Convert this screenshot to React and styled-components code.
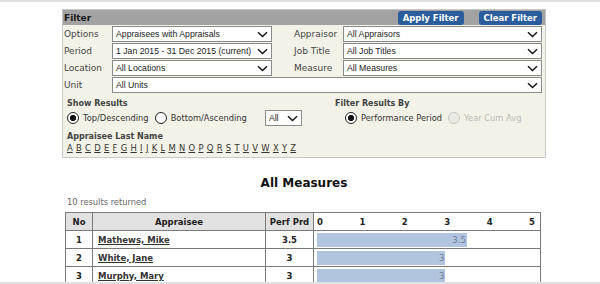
import React from "react";
import styled, { createGlobalStyle } from "styled-components";

const GlobalStyle = createGlobalStyle`
  html, body {
    margin: 0;
    padding: 0;
    background: #ffffff;
    font-family: "DejaVu Sans", Verdana, sans-serif;
    color: #333333;
  }
  body {
    border-top: 2px solid #e2e2e2;
    overflow: hidden;
  }
`;

const letters = "ABCDEFGHIJKLMNOPQRSTUVWXYZ".split("");

const results = [
  { no: 1, name: "Mathews, Mike", perf: "3.5", value: 3.5 },
  { no: 2, name: "White, Jane", perf: "3", value: 3 },
  { no: 3, name: "Murphy, Mary", perf: "3", value: 3 },
];

const UNIT = 42.8;

const Chevron = () => (
  <svg width="11" height="7" viewBox="0 0 11 7">
    <path d="M1 1.2 L5.5 5.5 L10 1.2" fill="none" stroke="#111" strokeWidth="1.4" />
  </svg>
);

const Dropdown = ({ value, span }) => (
  <SelectBox $span={span}>
    <span>{value}</span>
    <Chevron />
  </SelectBox>
);

const Radio = ({ checked, disabled, label }) => (
  <RadioItem $disabled={disabled}>
    <RadioDot $checked={checked} $disabled={disabled} />
    {label}
  </RadioItem>
);

const App = () => {
  return (
    <Page>
      <GlobalStyle />
      <FilterPanel>
        <FilterHeader>
          <HeaderTitle>Filter</HeaderTitle>
          <ButtonGroup>
            <ActionButton>Apply Filter</ActionButton>
            <ActionButton>Clear Filter</ActionButton>
          </ButtonGroup>
        </FilterHeader>
        <FieldGrid>
          <FieldLabel>Options</FieldLabel>
          <Dropdown value="Appraisees with Appraisals" />
          <FieldLabel $right>Appraisor</FieldLabel>
          <Dropdown value="All Appraisors" />

          <FieldLabel>Period</FieldLabel>
          <Dropdown value="1 Jan 2015 - 31 Dec 2015 (current)" />
          <FieldLabel $right>Job Title</FieldLabel>
          <Dropdown value="All Job Titles" />

          <FieldLabel>Location</FieldLabel>
          <Dropdown value="All Locations" />
          <FieldLabel $right>Measure</FieldLabel>
          <Dropdown value="All Measures" />

          <FieldLabel>Unit</FieldLabel>
          <Dropdown value="All Units" span />
        </FieldGrid>
        <OptionsRow>
          <OptionBlock>
            <SmallHeading>Show Results</SmallHeading>
            <RadioRow>
              <Radio checked label="Top/Descending" />
              <Radio label="Bottom/Ascending" />
              <CountSelect>
                <span>All</span>
                <Chevron />
              </CountSelect>
            </RadioRow>
          </OptionBlock>
          <OptionBlock $indent>
            <SmallHeading>Filter Results By</SmallHeading>
            <RadioRow $indent>
              <Radio checked label="Performance Period" />
              <Radio disabled label="Year Cum Avg" />
            </RadioRow>
          </OptionBlock>
        </OptionsRow>
        <LetterBlock>
          <SmallHeading>Appraisee Last Name</SmallHeading>
          <LetterRow>
            {letters.map((l) => (
              <Letter key={l}>{l}</Letter>
            ))}
          </LetterRow>
        </LetterBlock>
      </FilterPanel>

      <ReportTitle>All Measures</ReportTitle>
      <ResultCount>10 results returned</ResultCount>

      <ResultTable>
        <colgroup>
          <col style={{ width: 27 }} />
          <col style={{ width: 173 }} />
          <col style={{ width: 48 }} />
          <col />
        </colgroup>
        <thead>
          <tr>
            <HeadCell>No</HeadCell>
            <HeadCell>Appraisee</HeadCell>
            <HeadCell>Perf Prd</HeadCell>
            <ScaleCell>
              <Scale>
                {[0, 1, 2, 3, 4, 5].map((n) => (
                  <span key={n}>{n}</span>
                ))}
              </Scale>
            </ScaleCell>
          </tr>
        </thead>
        <tbody>
          {results.map((r) => (
            <tr key={r.no}>
              <NumCell>{r.no}</NumCell>
              <NameCell>
                <NameLink>{r.name}</NameLink>
              </NameCell>
              <NumCell>{r.perf}</NumCell>
              <BarCell>
                <Bar style={{ width: r.value * UNIT }}>{r.perf}</Bar>
              </BarCell>
            </tr>
          ))}
        </tbody>
      </ResultTable>
      <BottomEdge />
    </Page>
  );
};

export default App;

const Page = styled.div`
  padding: 7px 54px 0 62px;
`;

const FilterPanel = styled.div`
  background: #f3f2e8;
  border: 1px solid #c9c9c9;
  padding-bottom: 4px;
`;

const FilterHeader = styled.div`
  display: flex;
  align-items: center;
  justify-content: space-between;
  height: 15px;
  background: #a2a2a2;
  padding: 0 3px 0 1px;
`;

const HeaderTitle = styled.div`
  font-weight: bold;
  font-size: 9px;
  color: #1a1a1a;
`;

const ButtonGroup = styled.div`
  display: flex;
  gap: 15px;
`;

const ActionButton = styled.div`
  background: #2b5c9c;
  color: #ffffff;
  font-weight: bold;
  font-size: 8.5px;
  border-radius: 3px;
  height: 14px;
  line-height: 14px;
  padding: 0 5px;
`;

const FieldGrid = styled.div`
  display: grid;
  grid-template-columns: 48px 160px 71px 1fr;
  row-gap: 1px;
  padding: 1px 3px 0 1px;
`;

const FieldLabel = styled.div`
  font-size: 9px;
  color: #444444;
  line-height: 16px;
  padding-left: ${(p) => (p.$right ? "22px" : "0")};
`;

const SelectBox = styled.div`
  grid-column: ${(p) => (p.$span ? "2 / 5" : "auto")};
  display: flex;
  align-items: center;
  justify-content: space-between;
  height: 14px;
  background: #ffffff;
  border: 1px solid #8a8a8a;
  padding: 0 3px 0 3px;
  font-family: "Liberation Sans", Arial, sans-serif;
  font-size: 8.7px;
  color: #222222;
`;

const OptionsRow = styled.div`
  display: flex;
  padding: 6px 0 0 4px;
`;

const OptionBlock = styled.div`
  flex: ${(p) => (p.$indent ? "1" : "0 0 268px")};
`;

const SmallHeading = styled.div`
  font-size: 8px;
  font-weight: bold;
  color: #444444;
  line-height: 10px;
`;

const RadioRow = styled.div`
  display: flex;
  align-items: center;
  gap: 6px;
  height: 16px;
  margin-top: 1px;
  padding-left: ${(p) => (p.$indent ? "10px" : "0")};
`;

const RadioItem = styled.div`
  display: flex;
  align-items: center;
  gap: 4px;
  font-size: 8.3px;
  color: ${(p) => (p.$disabled ? "#b9b9b9" : "#333333")};
`;

const RadioDot = styled.span`
  width: 10px;
  height: 10px;
  border-radius: 50%;
  border: 1px solid ${(p) => (p.$disabled ? "#c4c4c4" : "#222222")};
  background: ${(p) =>
    p.$checked
      ? "radial-gradient(circle, #111 0 2.8px, #fff 3.3px)"
      : p.$disabled
      ? "#ebebe6"
      : "#ffffff"};
`;

const CountSelect = styled(SelectBox)`
  width: 29px;
  margin-left: 12px;
  height: 14px;
`;

const LetterBlock = styled.div`
  padding: 6px 0 0 4px;
`;

const LetterRow = styled.div`
  display: flex;
  gap: 3.3px;
  margin-top: 1px;
`;

const Letter = styled.span`
  font-size: 8.4px;
  text-decoration: underline;
  color: #333333;
`;

const ReportTitle = styled.div`
  text-align: center;
  font-weight: bold;
  font-size: 12px;
  color: #111111;
  margin-top: 18px;
`;

const ResultCount = styled.div`
  font-size: 8.3px;
  color: #666666;
  margin: 7px 0 0 5px;
`;

const ResultTable = styled.table`
  border-collapse: collapse;
  width: 476px;
  margin: 5px 0 0 3px;
  table-layout: fixed;
  font-size: 8.5px;
`;

const HeadCell = styled.th`
  background: #e1e1e1;
  border: 1.5px solid #7a7a7a;
  height: 17px;
  padding: 0;
  font-weight: bold;
  color: #222222;
`;

const ScaleCell = styled.th`
  border: 1.5px solid #7a7a7a;
  padding: 0 5px 0 3px;
  background: #ffffff;
`;

const Scale = styled.div`
  display: flex;
  justify-content: space-between;
  font-weight: bold;
  color: #222222;
`;

const NumCell = styled.td`
  border: 1.5px solid #7a7a7a;
  height: 17px;
  padding: 0;
  text-align: center;
  font-weight: bold;
  color: #222222;
`;

const NameCell = styled.td`
  border: 1.5px solid #7a7a7a;
  padding: 0 0 0 5px;
`;

const NameLink = styled.span`
  font-weight: bold;
  text-decoration: underline;
  color: #333333;
`;

const BarCell = styled.td`
  border: 1.5px solid #7a7a7a;
  padding: 0 0 0 3px;
`;

const Bar = styled.div`
  height: 14px;
  line-height: 14px;
  background: #b1c5de;
  color: #6b7b95;
  text-align: right;
  padding-right: 1px;
  box-sizing: border-box;
`;

const BottomEdge = styled.div`
  position: fixed;
  left: 0;
  right: 0;
  bottom: 0;
  height: 2px;
  background: #e2e2e2;
`;
